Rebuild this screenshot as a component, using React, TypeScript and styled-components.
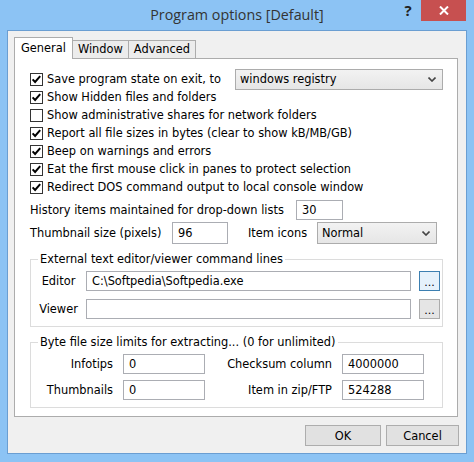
import React from "react";
import styled, { createGlobalStyle } from "styled-components";

const GlobalStyle = createGlobalStyle`
  html, body {
    margin: 0;
    padding: 0;
    background: #8cc3f4;
  }
  * {
    box-sizing: border-box;
  }
`;

const UI_FONT = `"DejaVu Sans", "Noto Sans", sans-serif`;

const Frame = styled.div`
  width: 474px;
  height: 462px;
  background: #8cc3f4;
  display: flex;
  flex-direction: column;
  font-family: ${UI_FONT};
  font-size: 11.4px;
  color: #000;
`;

const TitleBar = styled.div`
  height: 30px;
  display: grid;
  grid-template-columns: 1fr auto 1fr;
  align-items: start;
  padding-right: 8px;
`;

const Title = styled.div`
  grid-column: 2;
  font-family: "Open Sans", "Noto Sans", sans-serif;
  font-size: 14.3px;
  color: #333;
  line-height: 30px;
  padding-left: 8px;
`;

const Controls = styled.div`
  grid-column: 3;
  justify-self: end;
  display: flex;
  align-items: flex-start;
`;

const HelpButton = styled.div`
  width: 26px;
  height: 21px;
  font-family: "Open Sans", sans-serif;
  font-weight: 700;
  font-size: 15px;
  line-height: 21px;
  text-align: center;
  color: #222;
`;

const CloseButton = styled.div`
  width: 45px;
  height: 21px;
  background: #c75050;
  display: flex;
  align-items: center;
  justify-content: center;
`;

const Client = styled.div`
  flex: 1;
  margin: 0 7px 8px 7px;
  border: 1px solid #6a9ed2;
  background: #f0f0f0;
  padding: 6px 8px 0 6px;
  display: flex;
  flex-direction: column;
`;

const TabStrip = styled.div`
  height: 21px;
  display: flex;
  align-items: flex-end;
`;

const Tab = styled.div<{ $active?: boolean }>`
  height: ${(p) => (p.$active ? "22px" : "18px")};
  margin-bottom: ${(p) => (p.$active ? "-1px" : "0")};
  position: relative;
  z-index: ${(p) => (p.$active ? 1 : 0)};
  padding: ${(p) => (p.$active ? "2px 6px 0 6px" : "0 5px")};
  border: 1px solid #acacac;
  border-bottom: none;
  background: ${(p) => (p.$active ? "#fff" : "#ececec")};
  line-height: 17px;
  white-space: nowrap;
  & + & {
    margin-left: -1px;
  }
`;

const Panel = styled.div`
  height: 359px;
  border: 1px solid #acacac;
  background: #fff;
  padding: 11px 14px 0 15px;
  display: flex;
  flex-direction: column;
`;

const CheckRow = styled.div`
  height: 18px;
  display: flex;
  align-items: center;
`;

const CheckLabel = styled.span`
  margin-left: 4px;
  white-space: nowrap;
`;

const FieldRow = styled.div<{ $top: number; $height: number }>`
  height: ${(p) => p.$height}px;
  margin-top: ${(p) => p.$top}px;
  display: flex;
  align-items: center;
`;

const FieldLabel = styled.span<{ $width?: number; $gap?: number }>`
  width: ${(p) => (p.$width ? `${p.$width}px` : "auto")};
  margin-left: ${(p) => p.$gap ?? 0}px;
  white-space: nowrap;
`;

const TextBox = styled.div<{ $width?: number; $height?: number }>`
  width: ${(p) => (p.$width ? `${p.$width}px` : "auto")};
  height: ${(p) => p.$height ?? 20}px;
  border: 1px solid #abadb3;
  background: #fff;
  padding: 0 5px;
  display: flex;
  align-items: center;
  white-space: nowrap;
  overflow: hidden;
`;

const Select = styled.div<{ $width: number; $height: number }>`
  width: ${(p) => p.$width}px;
  height: ${(p) => p.$height}px;
  border: 1px solid #acacac;
  background: linear-gradient(#f2f2f2, #e6e6e6);
  padding: 0 6px 0 4px;
  display: flex;
  align-items: center;
  justify-content: space-between;
`;

const SelectSpacer = styled.div`
  margin-left: auto;
`;

const Group = styled.fieldset<{ $top: number }>`
  margin: ${(p) => p.$top}px 0 0 0;
  padding: 5px 10px 7px 0;
  border: 1px solid #dcdcdc;
  min-width: 0;
`;

const Legend = styled.legend`
  margin-left: 7px;
  padding: 0 2px;
  line-height: 14px;
  font-size: 11.4px;
`;

const EditorGrid = styled.div`
  display: grid;
  grid-template-columns: 55px 1fr 21px;
  grid-auto-rows: 20px;
  row-gap: 8px;
  align-items: center;
`;

const CenterLabel = styled.span`
  text-align: center;
`;

const BrowseButton = styled.div<{ $focused?: boolean }>`
  height: 20px;
  margin-left: 8px;
  width: 21px;
  border: 1px solid ${(p) => (p.$focused ? "#3c7fb1" : "#acacac")};
  background: ${(p) => (p.$focused ? "#e5f1fb" : "#e5e5e5")};
  display: flex;
  align-items: flex-end;
  justify-content: center;
  line-height: 14px;
  font-size: 11px;
`;

const LimitsGrid = styled.div`
  display: grid;
  grid-template-columns: 92px 82px 137px 82px;
  grid-auto-rows: 20px;
  row-gap: 6px;
  align-items: center;
`;

const RightLabel = styled.span`
  text-align: right;
  padding-right: 10px;
  white-space: nowrap;
`;

const Footer = styled.div`
  margin-top: 8px;
  margin-right: -1px;
  display: flex;
  justify-content: flex-end;
  gap: 5px;
`;

const DialogButton = styled.div<{ $width: number }>`
  width: ${(p) => p.$width}px;
  height: 21px;
  border: 1px solid #adadad;
  background: #e1e1e1;
  display: flex;
  align-items: center;
  justify-content: center;
`;

const Check = ({ checked }: { checked: boolean }) => (
  <svg width="13" height="13" viewBox="0 0 13 13">
    <rect x="0.5" y="0.5" width="12" height="12" fill="#fff" stroke="#333" />
    {checked && (
      <path
        d="M2.6 6.4 L5.1 9 L10.2 3.2"
        fill="none"
        stroke="#000"
        strokeWidth="2"
      />
    )}
  </svg>
);

const Chevron = () => (
  <svg width="8" height="5" viewBox="0 0 8 5">
    <path d="M0.5 0.5 L4 4 L7.5 0.5" fill="none" stroke="#444" strokeWidth="1.6" />
  </svg>
);

const options: [string, boolean][] = [
  ["Show Hidden files and folders", true],
  ["Show administrative shares for network folders", false],
  ["Report all file sizes in bytes (clear to show kB/MB/GB)", true],
  ["Beep on warnings and errors", true],
  ["Eat the first mouse click in panes to protect selection", true],
  ["Redirect DOS command output to local console window", true],
];

export default function App() {
  return (
    <>
      <GlobalStyle />
      <Frame>
        <TitleBar>
          <Title>Program options [Default]</Title>
          <Controls>
            <HelpButton>?</HelpButton>
            <CloseButton>
              <svg width="10" height="9" viewBox="0 0 10 9">
                <path d="M1 0.5 L9 8.5 M9 0.5 L1 8.5" stroke="#fff" strokeWidth="2" />
              </svg>
            </CloseButton>
          </Controls>
        </TitleBar>

        <Client>
          <TabStrip>
            <Tab $active>General</Tab>
            <Tab>Window</Tab>
            <Tab>Advanced</Tab>
          </TabStrip>

          <Panel>
            <CheckRow>
              <Check checked />
              <CheckLabel>Save program state on exit, to</CheckLabel>
              <SelectSpacer />
              <Select $width={208} $height={21}>
                <span>windows registry</span>
                <Chevron />
              </Select>
            </CheckRow>
            {options.map(([label, checked]) => (
              <CheckRow key={label}>
                <Check checked={checked} />
                <CheckLabel>{label}</CheckLabel>
              </CheckRow>
            ))}

            <FieldRow $top={4} $height={20}>
              <FieldLabel $width={266}>History items maintained for drop-down lists</FieldLabel>
              <TextBox $width={47}>30</TextBox>
            </FieldRow>
            <FieldRow $top={2} $height={22}>
              <FieldLabel $width={142}>Thumbnail size (pixels)</FieldLabel>
              <TextBox $width={56} $height={22}>96</TextBox>
              <FieldLabel $width={69} $gap={20}>Item icons</FieldLabel>
              <Select $width={120} $height={22}>
                <span>Normal</span>
                <Chevron />
              </Select>
            </FieldRow>

            <Group $top={8}>
              <Legend>External text editor/viewer command lines</Legend>
              <EditorGrid>
                <CenterLabel>Editor</CenterLabel>
                <TextBox>C:\Softpedia\Softpedia.exe</TextBox>
                <BrowseButton $focused>...</BrowseButton>
                <CenterLabel>Viewer</CenterLabel>
                <TextBox />
                <BrowseButton>...</BrowseButton>
              </EditorGrid>
            </Group>

            <Group $top={8}>
              <Legend>Byte file size limits for extracting... (0 for unlimited)</Legend>
              <LimitsGrid>
                <RightLabel>Infotips</RightLabel>
                <TextBox>0</TextBox>
                <RightLabel>Checksum column</RightLabel>
                <TextBox>4000000</TextBox>
                <RightLabel>Thumbnails</RightLabel>
                <TextBox>0</TextBox>
                <RightLabel>Item in zip/FTP</RightLabel>
                <TextBox>524288</TextBox>
              </LimitsGrid>
            </Group>
          </Panel>

          <Footer>
            <DialogButton $width={76}>OK</DialogButton>
            <DialogButton $width={73}>Cancel</DialogButton>
          </Footer>
        </Client>
      </Frame>
    </>
  );
}
